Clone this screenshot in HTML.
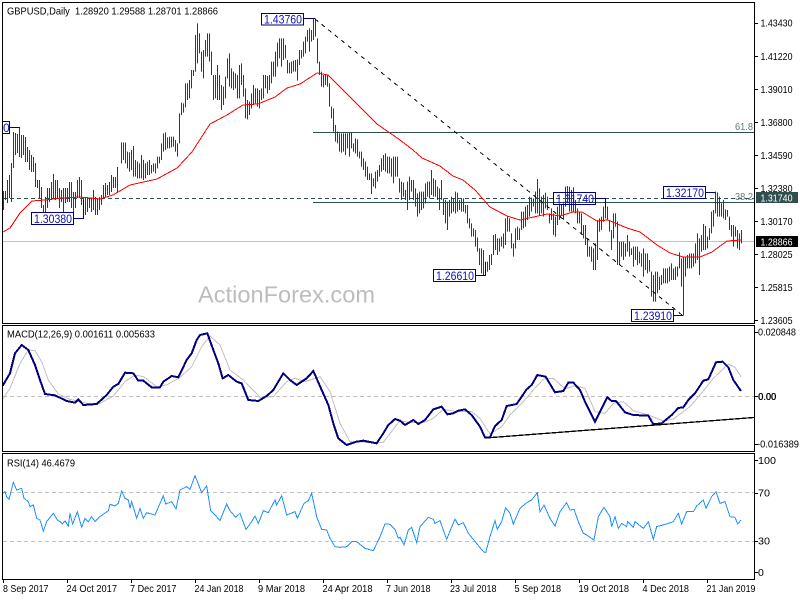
<!DOCTYPE html>
<html><head><meta charset="utf-8"><title>GBPUSD Daily</title>
<style>
html,body{margin:0;padding:0;background:#fff;width:800px;height:600px;overflow:hidden}
svg{display:block}
text{font-family:"Liberation Sans",sans-serif;font-size:10.5px;fill:#000}
.l{font-size:12px;fill:#1010c0}
.w{fill:#bdbdbd;font-size:23px}
.g{fill:#5f7a7a}
</style></head><body>
<svg width="800" height="600" viewBox="0 0 800 600" xmlns="http://www.w3.org/2000/svg">
<rect width="800" height="600" fill="#fff"/>
<text x="198" y="302.5" class="w" textLength="177" lengthAdjust="spacingAndGlyphs">ActionForex.com</text>

<g shape-rendering="crispEdges" fill="none">
<path d="M3 241.5H754" stroke="#c0c0c0"/>
<path d="M313 132.5H754M313 202.5H754" stroke="#2f4f4f"/>
<path d="M3 198.5H754" stroke="#2f4f4f" stroke-dasharray="4 3"/>
<path d="M3 396.5H754M3 492.5H754M3 541.5H754" stroke="#c0c0c0" stroke-dasharray="4 3"/>

<!-- bars A -->
<path stroke="#104560" transform="translate(.5 0)" d="M3 191V210M5 191V200M7 180V203M9 175V198M11 163V202M13 132V168M15 133V155M17 134V153M19 127V157M21 135V158M23 135V155M25 137V162M27 147V162M29 150V170M31 155V172M33 157V172M35 163V187M37 180V188M39 180V198M41 187V208M43 205V213M45 197V215M47 188V208M49 188V202M51 182V200M53 174V198M55 180V200M57 180V199M59 188V208M61 190V202M63 188V212M65 188V203M67 188V202M69 182V202M71 182V208M73 192V213M75 192V208M77 180V198M79 177V198M81 180V205M83 198V218M85 197V215M87 197V212M89 198V208M91 198V212M93 190V210M95 197V215M97 198V215M99 197V210M101 195V205M103 185V198M105 183V197M107 185V195M109 182V195M111 175V192M113 177V188M115 177V188M117 167V192"/>
<!-- bars B (y in 3x) -->
<path stroke="#104560" transform="translate(.5 0) scale(1 .33333)" d="M121 427V490M123 427V480M125 428V490M127 455V505M129 457V515M131 450V510M133 438V530M135 480V530M137 485V535M139 490V535M141 465V535M143 480V540M145 490V535M147 485V525M149 480V525M151 495V520M153 490V515M155 490V520M157 470V505M159 470V490M161 430V480M163 400V455M165 397V450M167 412V445M169 410V445M171 410V442M173 410V440M175 420V455M177 430V470M179 340V430M181 308V345M183 310V338M185 250V322M187 250V300M189 240V295M191 210V265M193 210V228M195 105V215M197 70V190M199 100V160M201 155V215M203 150V235M205 120V170M207 100V170M209 100V185M211 155V225M213 225V300M215 225V295M217 195V300M219 225V300M221 255V330M223 260V315M225 230V295M227 175V235M229 160V260M231 205V265M233 215V270M235 220V265M237 225V295M239 195V295M241 190V255M243 225V290M245 265V355M247 300V358M249 305V345M251 280V325M253 255V315M255 265V310M257 265V320M259 270V325M261 265V300M263 225V295M265 225V265M267 228V280M269 225V270M271 185V250M273 185V230M275 155V230M277 128V200M279 115V175M281 115V200M283 115V180M285 135V175M287 180V220M289 188V220M291 185V220M293 182V215M295 180V215M297 178V242M299 150V195M301 150V175M303 125V170M305 110V160M307 90V125M309 85V155M311 90V125M313 55V120M315 60V110M317 115V190M319 185V225M321 215V260M323 225V262M325 225V255M327 225V260M329 250V320M331 320V355M333 325V395M335 375V425M337 395V430M339 400V455M341 400V458M343 400V455M345 400V465M347 400V445M349 397V470M351 397V445M353 430V455M355 415V460M357 418V470M359 455V475M361 455V500M363 475V510M365 485V530M367 500V540M369 520V540M371 520V582M373 535V560M375 515V565M377 510V545M379 495V530M381 475V515M383 465V510M385 460V515M387 470V520M389 470V520M391 475V530M393 470V550M395 470V530M397 470V530M399 535V578M401 545V600M403 548V590M405 570V600M407 545V630M409 530V600M411 540V575M413 540V600M415 565V620M417 580V650M419 575V640M421 575V630M423 575V625M425 550V610M427 545V590M429 545V595M431 510V585M433 535V590M435 540V590M437 560V600M439 565V630M441 540V600M443 595V645M445 600V670M447 605V690M449 600V650M451 590V640M453 595V635M455 575V640M457 578V635M459 600V630M461 595V635M463 595V635M465 615V640M467 615V670M469 655V685M471 670V710M473 685V710M475 690V740M477 712V755M479 745V795M481 745V820M483 750V825M485 785V825M487 785V815M489 765V810M491 762V795M493 705V765M495 702V750M497 715V765M499 715V755M501 710V740M503 700V745M505 655V735M507 650V695M509 655V695M511 700V745M513 730V770M515 685V745M517 680V720M519 685V720M521 635V690M523 635V685M525 620V680M527 615V660M529 590V650M531 593V635M533 595V620M535 575V640M537 537V640M539 565V645M541 590V640M543 585V650M545 578V625M547 590V630M549 640V670M551 625V660M553 640V705M555 650V710M557 620V675M559 610V660M561 615V645M563 610V660M565 560V620M567 558V610M569 560V635M571 570V635M573 562V635M575 600V640M577 625V670M579 635V670M581 640V700M583 675V715M585 675V735M587 715V770M589 740V770M591 740V785M593 745V810M595 730V810M597 660V780M599 655V695M601 650V690M603 620V665M605 595V655M607 620V660M609 660V695M611 690V750M613 640V715M615 640V680M617 665V795M619 725V795M621 725V770M623 725V780M625 730V770M627 705V755M629 725V770M631 745V765M633 740V800M635 740V780M637 740V795M639 755V790M641 760V800M643 745V830M645 760V810M647 760V820M649 780V815M651 815V890M653 825V905M655 815V905M657 815V880M659 830V870M661 825V855M663 805V850M665 805V850M667 805V850M669 800V845M671 790V840M673 805V840M675 800V840M677 800V830M679 757V805M681 775V860M683 770V945M685 770V830M687 765V805M689 760V805M691 760V805M693 760V800M695 730V790M697 700V780M699 715V825M701 705V755M703 672V750M705 678V750M707 710V745M709 685V720M711 635V700M713 630V680M715 575V640M717 577V650M719 590V650M721 610V650M723 600V655M725 628V660M727 630V650M729 650V690M731 675V710M733 675V740M735 680V710M737 690V745M739 700V750M741 690V730"/>

<!-- MA -->
<polyline stroke="#ff0000" points="3,232 10,228 20,213 32,201 45,200 62,198 80,197 100,199 113,195 130,185 157,179 177,168 192,152 210,124 227,115 243,105 258,104 275,97 287,88 300,84 317,73 328,75 350,97 377,124 400,140 413,150 422,158 440,166 453,176 463,180 475,190 490,207 507,216 520,220 547,214 560,216 573,212 582,212 597,221 608,220 627,228 640,232 657,245 670,253 683,257 700,257 712,252 727,241 742,240"/>
<path d="M315 19L682 315" stroke="#000" stroke-dasharray="4 4.5"/>
</g>

<!-- Labels with boxes -->
<g shape-rendering="crispEdges" fill="#fff" stroke="#000080">
<rect x="261.5" y="13.5" width="42" height="11.5"/>
<rect x="31.5" y="212.5" width="42" height="12"/>
<rect x="433.5" y="269.5" width="42" height="12"/>
<rect x="631.5" y="309.5" width="42" height="12"/>
<rect x="663.5" y="186.5" width="42" height="12"/>
<rect x="2.5" y="121.5" width="7" height="12"/>
<rect x="553.5" y="192.5" width="42" height="12" fill="none"/>
<path fill="none" d="M304 18.5H315.5M74 218.5H83.5V200M476 275.5H485.5V262M674 315.5H683.5M706 192.5H715.5M596 198.5H605.5V208M10 127.5H19.5"/>
</g>
<text x="264" y="23.5" class="l" textLength="38" lengthAdjust="spacingAndGlyphs">1.43760</text>
<text x="34" y="223" class="l" textLength="38" lengthAdjust="spacingAndGlyphs">1.30380</text>
<text x="436" y="280" class="l" textLength="38" lengthAdjust="spacingAndGlyphs">1.26610</text>
<text x="634" y="320" class="l" textLength="38" lengthAdjust="spacingAndGlyphs">1.23910</text>
<text x="666" y="197" class="l" textLength="38" lengthAdjust="spacingAndGlyphs">1.32170</text>
<text x="556" y="203" class="l" textLength="38" lengthAdjust="spacingAndGlyphs">1.31740</text>
<text x="3" y="132" class="l">0</text>

<!-- MACD -->
<g shape-rendering="crispEdges" fill="none">
<g transform="translate(0 320) scale(.33333)" stroke-width="3">
<polyline stroke="#c0c0c0" points="8,237 30,205 60,130 85,90 105,92 125,125 145,180 175,222 210,238 260,250 300,250 340,228 375,185 405,165 430,170 470,200 500,195 540,172 575,140 605,80 630,48 660,75 690,150 730,180 780,232 820,230 860,185 885,175 915,185 960,170 990,215 1020,310 1050,365 1100,367 1150,367 1200,302"/>
<polyline stroke="#c0c0c0" points="1200,302 1230,308 1270,308 1300,295 1330,268 1370,275 1415,275 1440,295 1470,342 1505,320 1530,285 1570,245 1600,210 1630,178 1660,175 1695,207 1725,197 1755,205 1785,275 1815,280 1840,250 1870,245 1900,272 1945,285 1990,303 2020,297 2070,260 2100,225 2140,175 2185,132 2205,142 2223,170"/>
<polyline stroke="#000080" stroke-width="6" points="8,197 30,160 45,100 65,75 85,90 105,135 120,180 135,222 165,226 200,243 225,248 235,238 250,255 290,252 320,225 340,200 355,192 375,158 400,160 415,182 430,182 455,202 480,202 490,185 515,168 535,172 560,120 575,100 590,60 600,45 622,40 640,90 655,130 668,175 685,165 710,185 725,190 745,240 775,243 800,228 820,210 850,160 870,180 890,195 920,175 940,153 965,210 985,255 1000,310 1015,355 1040,375 1070,365 1090,362 1130,370 1150,340 1165,315 1185,297 1200,302 1215,315 1240,300 1255,312 1275,300 1300,268 1325,260 1342,283 1360,280 1375,272 1395,268 1415,285 1440,320 1455,352 1470,352 1485,318 1505,300 1520,258 1550,252 1580,208 1595,195 1612,165 1637,170 1665,217 1690,213 1705,188 1720,188 1740,210 1755,245 1785,305 1805,265 1822,232 1835,243 1848,243 1875,277 1900,285 1945,287 1960,313 1985,310 2015,285 2035,264 2050,262 2065,240 2085,220 2110,182 2125,178 2148,127 2168,125 2185,142 2200,180 2223,213"/>
<!-- RSI -->
<polyline stroke="#1e90ff" points="8,520 15,515 20,530 27,538 40,487 50,510 65,505 72,535 85,545 90,560 100,555 110,595 120,600 130,633 140,605 160,580 172,600 180,605 187,612 195,603 205,618 210,580 218,612 232,575 245,622 255,595 265,605 275,590 285,605 300,590 325,572 330,553 345,558 355,550 365,513 375,535 385,540 390,565 395,545 410,595 420,565 430,595 440,578 465,585 490,527 497,552 515,545 528,567 540,510 560,500 570,508 585,467 605,518 620,498 632,572 645,585 660,602 680,552 690,572 707,592 720,580 738,628 755,605 765,588 775,610 790,572 805,578 825,540 830,555 845,527 860,585 885,575 892,595 912,550 925,542 935,520 950,590 965,628 980,630 990,655 1005,680 1020,682 1040,680 1055,665 1070,665 1095,685 1120,692 1140,650 1155,612 1170,613 1185,628 1195,655 1200,652 1212,675 1225,630 1235,622 1250,668 1260,620 1285,592 1300,598 1305,610 1320,602 1340,658 1365,597 1375,615 1390,608 1405,640 1450,695 1457,698 1470,650 1485,602 1492,628 1505,605 1517,563 1530,580 1540,612 1560,565 1580,548 1595,540 1612,518 1620,575 1632,555 1650,595 1665,618 1680,575 1700,548 1710,570 1722,568 1735,605 1750,640 1760,645 1782,660 1795,590 1812,562 1830,590 1835,620 1845,590 1855,625 1865,610 1880,620 1883,605 1900,622 1905,605 1930,625 1945,605 1960,658 1970,620 2000,612 2020,605 2035,580 2045,612 2060,575 2080,575 2090,558 2110,540 2118,565 2135,530 2148,515 2160,550 2175,545 2190,590 2205,592 2213,612 2223,600"/>
</g>
<path d="M485 438L754 417.5" stroke="#000" stroke-width="1.3"/>

<!-- frame -->
<path stroke="#000" d="M2.5 2.5H754.5V323.5H2.5ZM2.5 325.5H754.5V451.5H2.5ZM2.5 453.5H754.5V579.5H2.5Z"/>
<!-- ticks -->
<path stroke="#000" d="M755 23.5H758M755 56.5H758M755 89.5H758M755 122.5H758M755 155.5H758M755 188.5H758M755 221.5H758M755 254.5H758M755 287.5H758M755 320.5H758M755 332.5H758M755 396.5H758M755 444.5H758M755 460.5H758M755 493.5H758M755 541.5H758M755 572.5H758M3.5 580V583M67.5 580V583M131.5 580V583M195.5 580V583M259.5 580V583M323.5 580V583M387.5 580V583M451.5 580V583M515.5 580V583M579.5 580V583M643.5 580V583M707.5 580V583"/>
</g>

<!-- titles -->
<text x="7" y="14.5" textLength="211" lengthAdjust="spacingAndGlyphs" xml:space="preserve">GBPUSD,Daily  1.28920 1.29588 1.28701 1.28866</text>
<text x="7" y="337.5" textLength="148" lengthAdjust="spacingAndGlyphs">MACD(12,26,9) 0.001611 0.005633</text>
<text x="7" y="466.5" textLength="68" lengthAdjust="spacingAndGlyphs">RSI(14) 46.4679</text>
<text x="735" y="130" class="g" textLength="18" lengthAdjust="spacingAndGlyphs">61.8</text>
<text x="735" y="200" class="g" textLength="18" lengthAdjust="spacingAndGlyphs">38.2</text>

<!-- axis right -->
<g>
<text x="760.5" y="26.5" textLength="32" lengthAdjust="spacingAndGlyphs">1.43430</text>
<text x="760.5" y="60" textLength="32" lengthAdjust="spacingAndGlyphs">1.41220</text>
<text x="760.5" y="93" textLength="32" lengthAdjust="spacingAndGlyphs">1.39010</text>
<text x="760.5" y="126" textLength="32" lengthAdjust="spacingAndGlyphs">1.36800</text>
<text x="760.5" y="159" textLength="32" lengthAdjust="spacingAndGlyphs">1.34590</text>
<text x="760.5" y="192" textLength="32" lengthAdjust="spacingAndGlyphs">1.32380</text>
<text x="760.5" y="225" textLength="32" lengthAdjust="spacingAndGlyphs">1.30170</text>
<text x="760.5" y="258" textLength="32" lengthAdjust="spacingAndGlyphs">1.28025</text>
<text x="760.5" y="291" textLength="32" lengthAdjust="spacingAndGlyphs">1.25815</text>
<text x="760.5" y="324" textLength="32" lengthAdjust="spacingAndGlyphs">1.23605</text>
</g>
<rect x="756" y="192" width="42" height="11" fill="#2f4f4f"/>
<text x="760.5" y="201.5" style="fill:#fff" textLength="32" lengthAdjust="spacingAndGlyphs">1.31740</text>
<rect x="756" y="236" width="42" height="11" fill="#000"/>
<text x="760.5" y="245.5" style="fill:#fff" textLength="32" lengthAdjust="spacingAndGlyphs">1.28866</text>
<text x="758" y="335.5" textLength="38" lengthAdjust="spacingAndGlyphs">0.020848</text>
<text x="758" y="400" textLength="18" lengthAdjust="spacingAndGlyphs">0.00</text>
<text x="758.4" y="400" textLength="18" lengthAdjust="spacingAndGlyphs">0.00</text>
<text x="757" y="447.5" textLength="42" lengthAdjust="spacingAndGlyphs">-0.016389</text>
<text x="758" y="464" textLength="18" lengthAdjust="spacingAndGlyphs">100</text>
<text x="758" y="496.5" textLength="12" lengthAdjust="spacingAndGlyphs">70</text>
<text x="758" y="544.5" textLength="12" lengthAdjust="spacingAndGlyphs">30</text>
<text x="758" y="576">0</text>

<!-- dates -->
<text x="3" y="592" textLength="45.5" lengthAdjust="spacingAndGlyphs">8 Sep 2017</text>
<text x="66.5" y="592" textLength="50.5" lengthAdjust="spacingAndGlyphs">24 Oct 2017</text>
<text x="130" y="592" textLength="46.5" lengthAdjust="spacingAndGlyphs">7 Dec 2017</text>
<text x="194.5" y="592" textLength="49" lengthAdjust="spacingAndGlyphs">24 Jan 2018</text>
<text x="258" y="592" textLength="47" lengthAdjust="spacingAndGlyphs">9 Mar 2018</text>
<text x="322.5" y="592" textLength="50" lengthAdjust="spacingAndGlyphs">24 Apr 2018</text>
<text x="386" y="592" textLength="44.5" lengthAdjust="spacingAndGlyphs">7 Jun 2018</text>
<text x="450" y="592" textLength="46.5" lengthAdjust="spacingAndGlyphs">23 Jul 2018</text>
<text x="514.5" y="592" textLength="46.5" lengthAdjust="spacingAndGlyphs">5 Sep 2018</text>
<text x="578.5" y="592" textLength="50.5" lengthAdjust="spacingAndGlyphs">19 Oct 2018</text>
<text x="642.5" y="592" textLength="46.5" lengthAdjust="spacingAndGlyphs">4 Dec 2018</text>
<text x="706.5" y="592" textLength="49" lengthAdjust="spacingAndGlyphs">21 Jan 2019</text>
</svg>
</body></html>
